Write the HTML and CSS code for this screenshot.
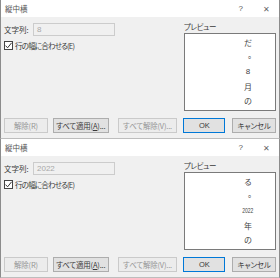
FILE: index.html
```html
<!DOCTYPE html>
<html lang="ja">
<head>
  <meta charset="UTF-8" />
  <title>縦中横</title>
  <link rel="stylesheet" href="styles.css">
</head>
<body>
  <!-- first dialog: "8" -->
  <div class="dialog">
    <div class="titlebar">
      <span class="title">縦中横</span>
      <span class="help">?</span>
      <span class="close">✕</span>
    </div>
    <div class="body">
      <div class="main">
        <div class="left">
          <div class="field">
            <span class="label">文字列:</span>
            <div class="input">8</div>
          </div>
          <div class="check">
            <span class="box">
              <svg width="9" height="9" viewBox="0 0 9 9"><path d="M1.5 4.6 L3.6 6.8 L7.6 1.8" fill="none" stroke="#333" stroke-width="1"/></svg>
            </span>
            <span class="check-text">行の幅に合わせる(E)</span>
          </div>
        </div>
        <div class="right">
          <div class="plabel">プレビュー</div>
          <div class="preview">
            <div class="vtext">
              <span class="ch">だ</span>
              <span class="ch dot">。</span>
              <span class="ch num">8</span>
              <span class="ch">月</span>
              <span class="ch">の</span>
            </div>
          </div>
        </div>
      </div>
      <div class="buttons">
        <div class="btn off w-del">解除(R)</div>
        <div class="btn w-apply">すべて適用(<u>A</u>)...</div>
        <div class="btn off w-clear">すべて解除(V)...</div>
        <div class="btn ok">OK</div>
        <div class="btn w-cancel">キャンセル</div>
      </div>
    </div>
  </div>

  <!-- second dialog: "2022" -->
  <div class="dialog">
    <div class="titlebar">
      <span class="title">縦中横</span>
      <span class="help">?</span>
      <span class="close">✕</span>
    </div>
    <div class="body">
      <div class="main">
        <div class="left">
          <div class="field">
            <span class="label">文字列:</span>
            <div class="input">2022</div>
          </div>
          <div class="check">
            <span class="box">
              <svg width="9" height="9" viewBox="0 0 9 9"><path d="M1.5 4.6 L3.6 6.8 L7.6 1.8" fill="none" stroke="#333" stroke-width="1"/></svg>
            </span>
            <span class="check-text">行の幅に合わせる(E)</span>
          </div>
        </div>
        <div class="right">
          <div class="plabel">プレビュー</div>
          <div class="preview">
            <div class="vtext">
              <span class="ch">る</span>
              <span class="ch dot">。</span>
              <span class="ch num small">2022</span>
              <span class="ch">年</span>
              <span class="ch">の</span>
            </div>
          </div>
        </div>
      </div>
      <div class="buttons">
        <div class="btn off w-del">解除(R)</div>
        <div class="btn w-apply">すべて適用(<u>A</u>)...</div>
        <div class="btn off w-clear">すべて解除(V)...</div>
        <div class="btn ok">OK</div>
        <div class="btn w-cancel">キャンセル</div>
      </div>
    </div>
  </div>
</body>
</html>
```

FILE: styles.css
```css
* {
  box-sizing: border-box;
}

body {
  margin: 0;
  width: 280px;
  font-family: "Noto Sans CJK JP", "Noto Sans", sans-serif;
  font-size: 7.5px;
  font-feature-settings: "palt";
  color: #3a3a3a;
  background: #f0f0f0;
}

.dialog {
  height: 139px;
  display: flex;
  flex-direction: column;
  border-left: 1px solid #8c8c8c;
  border-right: 1px solid #8c8c8c;
  border-bottom: 1px solid #bdbdbd;
}

.titlebar {
  height: 17px;
  background: #fff;
  display: flex;
  align-items: center;
  padding-left: 4px;
  color: #555;
}

.title {
  flex: 1;
}

.help {
  font-family: "Liberation Sans", sans-serif;
  font-size: 8px;
  margin-right: 20px;
}

.close {
  font-size: 8px;
  color: #666;
  margin-right: 9px;
}

.body {
  flex: 1;
  display: flex;
  flex-direction: column;
  padding: 5px 3px 5px 3px;
}

.main {
  display: flex;
  justify-content: space-between;
}

.left {
  padding-top: 1px;
}

.field {
  display: flex;
  align-items: center;
}

.label {
  width: 29px;
}

.input {
  width: 82px;
  height: 13px;
  border: 1px solid #cccccc;
  background: #f0f0f0;
  color: #a8a8a8;
  font-family: "Liberation Sans", sans-serif;
  font-size: 8px;
  line-height: 11px;
  padding-left: 3px;
}

.check {
  display: flex;
  align-items: center;
  margin-top: 4px;
  gap: 2px;
}

.check-text {
  letter-spacing: -0.8px;
}

.check .box {
  width: 9px;
  height: 9px;
  border: 1px solid #444;
  background: #fff;
  display: flex;
}

.check .box svg {
  margin: -1px;
}

.right {
  width: 92px;
}

.plabel {
  height: 11px;
  line-height: 10px;
  letter-spacing: -0.4px;
}

.preview {
  height: 78px;
  background: #fff;
  border: 1px solid #7a7a7a;
  display: flex;
  justify-content: flex-end;
  padding: 2px 20px 0 0;
}

.vtext {
  display: flex;
  flex-direction: column;
  align-items: center;
  width: 14px;
  font-size: 8px;
  color: #444;
}

.ch {
  height: 14.5px;
  line-height: 14.5px;
}

.dot {
  transform: translate(2px, -3px);
}

.num {
  font-family: "Liberation Sans", sans-serif;
}

.num.small {
  font-size: 7px;
  transform: scaleX(0.72);
}

.buttons {
  margin-top: auto;
  display: flex;
}

.btn {
  height: 15px;
  border: 1px solid #adadad;
  background: #e1e1e1;
  display: flex;
  align-items: center;
  justify-content: center;
  white-space: nowrap;
  letter-spacing: -0.2px;
}

.btn.off {
  border-color: #cacaca;
  background: #ececec;
  color: #969696;
}

.btn.ok {
  width: 42px;
  margin-left: 6px;
  border-color: #0078d7;
  font-family: "Liberation Sans", sans-serif;
}

.w-del {
  width: 44px;
}

.w-apply {
  width: 56px;
  margin-left: 5px;
}

.w-clear {
  width: 60px;
  margin-left: 9px;
}

.w-cancel {
  width: 44px;
  margin-left: 7px;
}
```
